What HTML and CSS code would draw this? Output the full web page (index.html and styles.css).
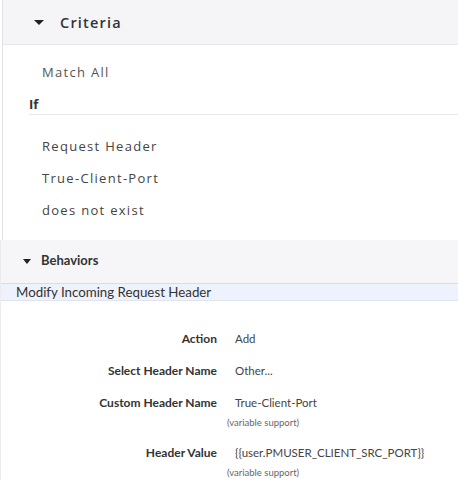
FILE: index.html
```html
<!DOCTYPE html>
<html>
<head>
<meta charset="utf-8">
<link rel="stylesheet" href="styles.css">
</head>
<body>
<div class="criteria">
  <div class="crit-head">
    <span class="tri tri-lg"></span>
    <span class="crit-title">Criteria</span>
  </div>
  <div class="crit-body">
    <div class="line match">Match All</div>
    <div class="if">If</div>
    <div class="line">Request Header</div>
    <div class="line">True-Client-Port</div>
    <div class="line">does not exist</div>
  </div>
</div>
<div class="behaviors">
  <div class="beh-head">
    <span class="tri tri-sm"></span>
    <span class="beh-title">Behaviors</span>
  </div>
  <div class="beh-name">Modify Incoming Request Header</div>
  <div class="form">
    <div class="row"><div class="label">Action</div><div class="value">Add</div></div>
    <div class="row"><div class="label">Select Header Name</div><div class="value">Other...</div></div>
    <div class="row row-tight"><div class="label">Custom Header Name</div><div class="value">True-Client-Port</div></div>
    <div class="hint">(variable support)</div>
    <div class="row row-tight"><div class="label">Header Value</div><div class="value">{{user.PMUSER_CLIENT_SRC_PORT}}</div></div>
    <div class="hint">(variable support)</div>
  </div>
</div>
</body>
</html>
```
FILE: styles.css
```css
html, body {
  margin: 0;
  padding: 0;
  background: #fff;
}
body {
  width: 458px;
  height: 491px;
  overflow: hidden;
  font-family: Lato, "Open Sans", sans-serif;
  color: #444;
}
.criteria {
  margin-left: 2px;
  border-left: 1px solid #e2e2e6;
  height: 240px;
  font-family: "Open Sans", Lato, sans-serif;
}
.crit-head {
  height: 45px;
  background: #f5f5f7;
  border-bottom: 1px solid #e6e6ea;
  display: flex;
  align-items: center;
  padding-left: 31px;
  box-sizing: border-box;
}
.tri {
  display: inline-block;
  width: 0;
  height: 0;
  border-left: 5px solid transparent;
  border-right: 5px solid transparent;
  border-top: 5px solid #222;
}
.tri-lg { margin-right: 16px; }
.crit-title {
  font-size: 14.5px;
  font-weight: 600;
  color: #333;
  letter-spacing: 1.2px;
}
.crit-body {
  padding-top: 18px;
}
.line {
  font-size: 13px;
  color: #444;
  padding-left: 39px;
  height: 32px;
  line-height: 18px;
  letter-spacing: 1.3px;
}
.match { color: #555; }
.if {
  margin-left: 26px;
  font-size: 13px;
  font-weight: 700;
  color: #333;
  line-height: 18px;
  padding-bottom: 1px;
  border-bottom: 1px solid #e8e8ea;
  margin-bottom: 22px;
}
.behaviors {
  border-left: 1px solid #ececee;
}
.beh-head {
  height: 44px;
  background: #f6f6f8;
  border-bottom: 1px solid #dcdce0;
  display: flex;
  align-items: center;
  padding-left: 22px;
  box-sizing: border-box;
}
.tri-sm {
  border-left-width: 4.5px;
  border-right-width: 4.5px;
  border-top-width: 5px;
  margin-right: 10px;
}
.beh-title {
  font-size: 13px;
  font-weight: 700;
  color: #333;
  margin-top: -3px;
}
.beh-name {
  background: #eef2fd;
  border-bottom: 1px solid #e0e4ee;
  height: 16px;
  line-height: 16px;
  font-size: 13.3px;
  color: #333;
  padding-left: 15px;
}
.form {
  padding-top: 27px;
}
.row {
  display: flex;
  align-items: center;
  height: 20px;
  margin-bottom: 12px;
}
.row-tight { margin-bottom: 4px; }
.label {
  width: 216px;
  text-align: right;
  font-size: 12px;
  font-weight: 700;
  color: #333;
}
.value {
  padding-left: 18px;
  font-size: 11.5px;
  color: #444;
}
.hint {
  padding-left: 226px;
  font-size: 9.5px;
  color: #666;
  height: 14px;
  line-height: 14px;
  margin-bottom: 12px;
}
```
